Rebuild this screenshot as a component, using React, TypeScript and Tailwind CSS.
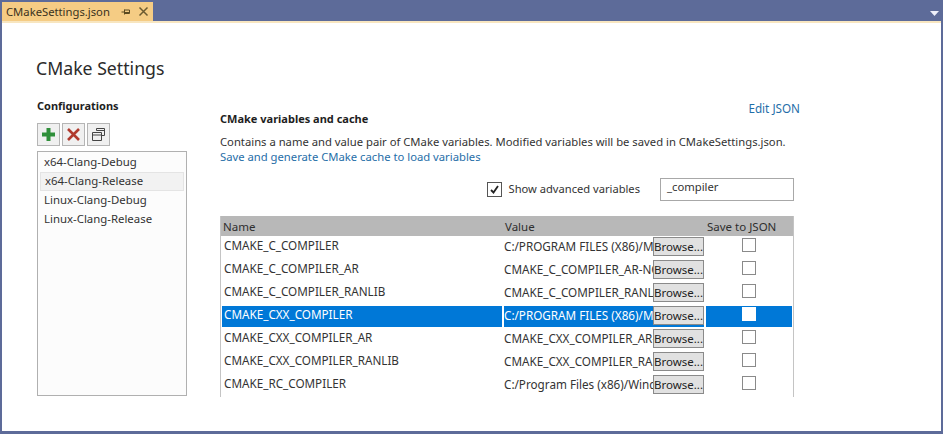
import React from 'react';

const rows = [
  { name: 'CMAKE_C_COMPILER', value: 'C:/PROGRAM FILES (X86)/MICROSOFT' },
  { name: 'CMAKE_C_COMPILER_AR', value: 'CMAKE_C_COMPILER_AR-NOTFOUND' },
  { name: 'CMAKE_C_COMPILER_RANLIB', value: 'CMAKE_C_COMPILER_RANLIB-NOTFOUND' },
  { name: 'CMAKE_CXX_COMPILER', value: 'C:/PROGRAM FILES (X86)/MICROSOFT', selected: true },
  { name: 'CMAKE_CXX_COMPILER_AR', value: 'CMAKE_CXX_COMPILER_AR-NOTFOUND' },
  { name: 'CMAKE_CXX_COMPILER_RANLIB', value: 'CMAKE_CXX_COMPILER_RANLIB-NOTFOUND' },
  { name: 'CMAKE_RC_COMPILER', value: 'C:/Program Files (x86)/Windows Kits' },
];

const configs = ['x64-Clang-Debug', 'x64-Clang-Release', 'Linux-Clang-Debug', 'Linux-Clang-Release'];

const ToolButton = ({ children }: { children: React.ReactNode }) => (
  <button className="flex h-[23px] w-[23px] items-center justify-center border border-[#b5b5b5] bg-[#f0f0f0]">
    {children}
  </button>
);

export default function App() {
  return (
    <div className="flex h-[434px] w-[943px] flex-col overflow-hidden bg-[#5d6b99] pb-[3px] pl-[2px] pr-[2px] pt-[2px] font-['Noto_Sans',sans-serif] text-[11.25px] text-[#333]">
      {/* Tab strip */}
      <div className="flex h-[19px] shrink-0 items-center justify-between">
        <div className="flex h-[19px] w-[151px] items-center bg-[#f5cc84] pl-[4px] text-[#3a3220]">
          <span className="w-[114px] whitespace-nowrap text-[11.25px] leading-none">CMakeSettings.json</span>
          <svg width="10" height="10" viewBox="0 0 10 10" className="ml-[1px]" fill="none" stroke="#5a4a20" strokeWidth="1">
            <path d="M0.5 5H3.5M3.5 2.5V7.5M3.5 3H8.5V6.5H3.5M3.5 5.5H8.5" />
          </svg>
          <svg width="11" height="11" viewBox="0 0 11 11" className="ml-[7px]" fill="none" stroke="#6b5a30" strokeWidth="1.5">
            <path d="M1.5 1.5L9.5 9.5M9.5 1.5L1.5 9.5" />
          </svg>
        </div>
        <svg width="9" height="5" viewBox="0 0 9 5" className="mr-[2px] mt-[3px]">
          <path d="M0 0H9L4.5 5Z" fill="#eef0fa" />
        </svg>
      </div>

      {/* Document */}
      <div className="flex min-h-0 flex-1 flex-col border-t-[2px] border-[#f8e6c0] bg-white pl-[35px]">
        <h1 className="-ml-[1px] mt-[33px] text-[17.7px] leading-[24px] text-[#2b2b2b]">CMake Settings</h1>
        <div className="mt-[18px] flex min-h-0">
          {/* Configurations */}
          <div className="w-[150px] shrink-0">
            <h2 className="text-[11px] font-bold leading-[16px] text-[#1e1e1e]">Configurations</h2>
            <div className="mt-[9px] flex gap-[2px]">
              <ToolButton>
                <svg width="15" height="15" viewBox="0 0 15 15">
                  <path d="M5.5 1H9.5V5.5H14V9.5H9.5V14H5.5V9.5H1V5.5H5.5Z" fill="#2f8f3a" />
                </svg>
              </ToolButton>
              <ToolButton>
                <svg width="15" height="15" viewBox="0 0 15 15" fill="none" stroke="#b03a2e" strokeWidth="2.6">
                  <path d="M2 2L13 13M13 2L2 13" />
                </svg>
              </ToolButton>
              <ToolButton>
                <svg width="15" height="15" viewBox="0 0 15 15" fill="none" stroke="#444" strokeWidth="1">
                  <path d="M5.5 3.5V1.5H13.5V8.5H10.5M5.5 3.5H13.5" />
                  <path d="M1.5 5.5H10.5V13.5H1.5ZM1.5 8H10.5" />
                </svg>
              </ToolButton>
            </div>
            <div className="mt-[5px] flex h-[245px] flex-col border border-[#b0b0b0] bg-[#fcfcfc] px-[2px] pt-[1px]">
              {configs.map((c, i) => (
                <div
                  key={c}
                  className={`flex h-[19px] items-center px-[4px] pb-[1px] text-[11.4px] ${i === 1 ? 'border border-[#e4e4e4] bg-[#f2f2f2]' : ''}`}
                >
                  {c}
                </div>
              ))}
            </div>
          </div>

          {/* Variables */}
          <div className="ml-[33px] w-[581px] shrink-0 pt-[2px]">
            <div className="pr-[1px] text-right text-[11.7px] leading-[16px] text-[#1f6ea8]">Edit JSON</div>
            <h2 className="-mt-[5px] text-[11px] font-bold leading-[16px] text-[#1e1e1e]">CMake variables and cache</h2>
            <p className="mt-[7px] whitespace-nowrap leading-[15px]">
              Contains a name and value pair of CMake variables. Modified variables will be saved in CMakeSettings.json.
            </p>
            <p className="leading-[15px] text-[#1f6ea8]">Save and generate CMake cache to load variables</p>

            <div className="mt-[14px] flex h-[23px] w-[574px] items-center justify-end">
              <span className="flex h-[15px] w-[15px] items-center justify-center border border-[#555] bg-white">
                <svg width="11" height="11" viewBox="0 0 11 11" fill="none" stroke="#222" strokeWidth="1.8">
                  <path d="M2 6L4.5 8.5L9 2" />
                </svg>
              </span>
              <span className="ml-[7px] text-[11.15px]">Show advanced variables</span>
              <div className="ml-[20px] flex h-[23px] w-[134px] items-center border border-[#a8a8a8] pb-[4px] pl-[6px]">
                _compiler
              </div>
            </div>

            {/* Table */}
            <div className="mt-[15px] h-[181px] w-[574px] overflow-hidden border-x border-[#c4c4c4] text-[11.7px]">
              <div className="grid h-[20px] grid-cols-[282px_201px_1fr] items-center bg-[#b8b8b8] pl-[2px] pt-[1px] text-[11.5px] text-[#2e2e2e]">
                <span>Name</span>
                <span>Value</span>
                <span className="pl-[1px]">Save to JSON</span>
              </div>
              <div className="h-[1px]" />
              {rows.map((r) => (
                <div key={r.name} className="grid h-[23px] grid-cols-[280px_200px_86px] gap-x-[2px] pl-[1px]">
                  <div className={`flex h-[21px] items-center pb-[3px] pl-[2px] ${r.selected ? 'bg-[#0078d7] text-white' : ''}`}>
                    {r.name}
                  </div>
                  <div className={`flex h-[21px] items-start ${r.selected ? 'bg-[#0078d7] text-white' : ''}`}>
                    <span className="w-[149px] overflow-hidden whitespace-nowrap pt-[1px]">{r.value}</span>
                    <button className="h-[19px] w-[51px] shrink-0 border border-[#8a8a8a] bg-[#e1e1e1] text-[11.5px] leading-none text-[#222]">
                      Browse...
                    </button>
                  </div>
                  <div className={`flex h-[21px] items-start justify-center pt-[1px] ${r.selected ? 'bg-[#0078d7]' : ''}`}>
                    <span className={`h-[14px] w-[14px] border ${r.selected ? 'border-white bg-white' : 'border-[#8a8a8a] bg-white'}`} />
                  </div>
                </div>
              ))}
            </div>
          </div>
        </div>
      </div>
    </div>
  );
}
